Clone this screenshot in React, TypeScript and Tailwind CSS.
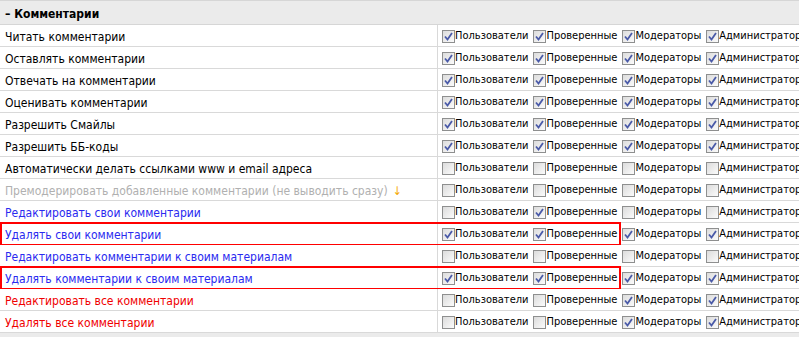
import React from 'react'

type Row = { label: string; tone: 'black' | 'gray' | 'blue' | 'red'; checks: number[]; boxed?: boolean; arrow?: boolean }

const rows: Row[] = [
  { label: 'Читать комментарии', tone: 'black', checks: [1, 1, 1, 1] },
  { label: 'Оставлять комментарии', tone: 'black', checks: [1, 1, 1, 1] },
  { label: 'Отвечать на комментарии', tone: 'black', checks: [1, 1, 1, 1] },
  { label: 'Оценивать комментарии', tone: 'black', checks: [1, 1, 1, 1] },
  { label: 'Разрешить Смайлы', tone: 'black', checks: [1, 1, 1, 1] },
  { label: 'Разрешить ББ-коды', tone: 'black', checks: [1, 1, 1, 1] },
  { label: 'Автоматически делать ссылками www и email адреса', tone: 'black', checks: [0, 0, 0, 0] },
  { label: 'Премодерировать добавленные комментарии (не выводить сразу)', tone: 'gray', checks: [0, 0, 0, 0], arrow: true },
  { label: 'Редактировать свои комментарии', tone: 'blue', checks: [0, 1, 0, 0] },
  { label: 'Удалять свои комментарии', tone: 'blue', checks: [1, 1, 1, 1], boxed: true },
  { label: 'Редактировать комментарии к своим материалам', tone: 'blue', checks: [0, 0, 0, 0] },
  { label: 'Удалять комментарии к своим материалам', tone: 'blue', checks: [1, 1, 1, 1], boxed: true },
  { label: 'Редактировать все комментарии', tone: 'red', checks: [0, 0, 1, 1] },
  { label: 'Удалять все комментарии', tone: 'red', checks: [0, 0, 1, 1] },
]

const groups = ['Пользователи', 'Проверенные', 'Модераторы', 'Администратор']

const toneClass = {
  black: 'text-black',
  gray: 'text-[#b0b0b0]',
  blue: 'text-[#2a2af0]',
  red: 'text-[#f00000]',
}

function Box({ checked }: { checked: boolean }) {
  return (
    <span className="flex h-[13px] w-[13px] shrink-0 items-center justify-center border border-[#8e8f8f] bg-gradient-to-br from-[#dcdcdc] to-[#fbfbfb]">
      {checked && (
        <svg width="9" height="9" viewBox="0 0 9 9" aria-hidden="true">
          <path d="M1 4.5 L3.5 7.5 L8 1" fill="none" stroke="#4a5aa8" strokeWidth="1.8" />
        </svg>
      )}
    </span>
  )
}

export default function App() {
  return (
    <div
      className="h-[337px] w-[799px] overflow-hidden border-t border-[#d6d6d6] bg-[#ebebeb] pt-[1px] text-[11px] text-black"
      style={{ fontFamily: '"DejaVu Sans Condensed", "DejaVu Sans", Verdana, sans-serif' }}
    >
      <div className="flex h-[23px] items-center border-b border-[#d6d6d6] bg-[#ebebeb] px-[5px] pt-px text-[12px] font-bold">
        – Комментарии
      </div>
      {rows.map((r) => (
        <div key={r.label} className="relative flex h-[22px] border-b border-[#d9d9d9] bg-white">
          <div className={`flex w-[438px] shrink-0 items-center whitespace-nowrap border-r border-[#d9d9d9] pl-[5px] pt-[2px] text-[12px] ${toneClass[r.tone]}`}>
            {r.label}
            {r.arrow && <span className="ml-[5px] text-[#f5a800]">↓</span>}
          </div>
          <div className="flex items-center whitespace-nowrap pl-[4px] pt-px">
            {groups.map((g, i) => (
              <label key={g} className="mr-[5px] flex items-center">
                <Box checked={r.checks[i] === 1} />
                <span className="pt-px">{g}</span>
              </label>
            ))}
          </div>
          {r.boxed && <div className="pointer-events-none absolute left-0 top-[-1px] h-[24px] w-[621px] border-2 border-[#ff0000]" />}
        </div>
      ))}
    </div>
  )
}
